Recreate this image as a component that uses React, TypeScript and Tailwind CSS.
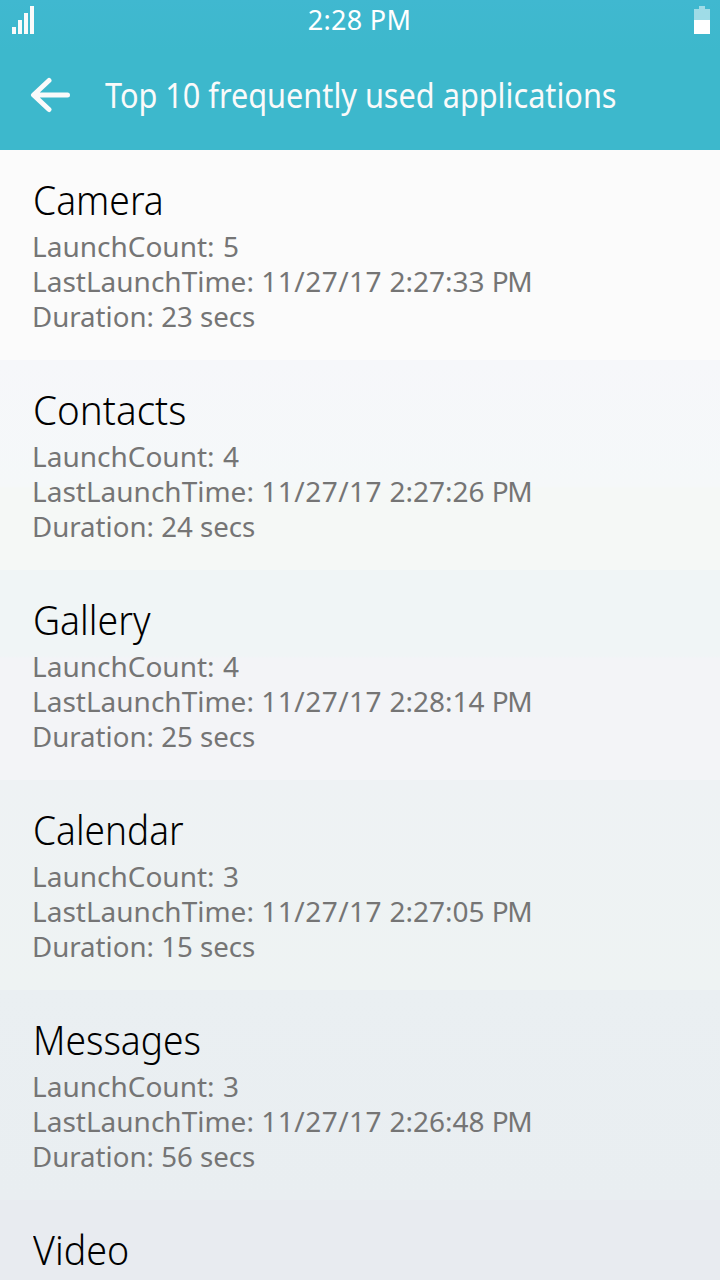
const apps = [
  { name: 'Camera', count: 5, date: '11/27/17', time: '2:27:33', secs: 23, bg: 'bg-[#fbfbfb]', fit: 'scale-x-[0.93]' },
  { name: 'Contacts', count: 4, date: '11/27/17', time: '2:27:26', secs: 24, bg: 'bg-[linear-gradient(#f6f7fa,#f5f8f9_60%,#f5f8f6_61%)]', fit: 'scale-x-[0.965]' },
  { name: 'Gallery', count: 4, date: '11/27/17', time: '2:28:14', secs: 25, bg: 'bg-[linear-gradient(#f0f5f6_41%,#f3f4f7_42%)]', fit: 'scale-x-[0.935]' },
  { name: 'Calendar', count: 3, date: '11/27/17', time: '2:27:05', secs: 15, bg: 'bg-[linear-gradient(#eef2f4,#eef3f3)]', fit: 'scale-x-[0.925]' },
  { name: 'Messages', count: 3, date: '11/27/17', time: '2:26:48', secs: 56, bg: 'bg-[linear-gradient(#eaeff2,#e9eef1)]', fit: 'scale-x-[0.93]' },
];

function AppName({ name, fit }: { name: string; fit: string }) {
  return (
    <h2 className={`ml-px h-[56px] w-max origin-left text-[40px] font-light leading-[54px] text-black ${fit}`}>{name}</h2>
  );
}

export default function App() {
  return (
    <div className="flex h-[1280px] w-[720px] flex-col overflow-hidden font-['Noto_Sans',sans-serif]">
      <header className="h-[150px] shrink-0 bg-[linear-gradient(#40b8d0,#3db8cc_50px)] text-white">
        <div className="grid h-10 grid-cols-[1fr_auto_1fr] items-center pl-3 pr-[10px]">
          <svg width="22" height="28" fill="#fafafa" shapeRendering="crispEdges">
            <path d="M0 21h4v7H0zM6 14h4v14H6zM12 7h4v21h-4zM18 0h4v28h-4z" />
          </svg>
          <span className="-ml-[3px] text-[27px] leading-10 tracking-[0.3px]">2:28 PM</span>
          <svg width="16" height="28" fill="white" shapeRendering="crispEdges" className="justify-self-end">
            <path d="M5 0h6v3h5v11H0V3h5z" opacity=".5" />
            <path d="M0 14h16v14H0z" />
          </svg>
        </div>
        <div className="flex h-[110px] items-center pl-[30px]">
          <svg width="42" height="38" fill="none" stroke="#fafafa" strokeWidth="5" strokeLinecap="round" strokeLinejoin="round">
            <path d="M19 4.5L3.5 19 19 33.5M4 19h33.5" />
          </svg>
          <h1 className="ml-[33px] w-max origin-left scale-x-[0.902] whitespace-nowrap pt-px text-[34px] font-normal text-[#fafafa]">
            Top 10 frequently used applications
          </h1>
        </div>
      </header>
      <main>
        {apps.map((a) => (
          <section key={a.name} className={`h-[210px] pl-8 pt-[23px] ${a.bg}`}>
            <AppName name={a.name} fit={a.fit} />
            <div className="text-[28px] leading-[35px] text-[#757575]">
              <p>
                LaunchCount: <span className="ml-px">{a.count}</span>
              </p>
              <p>
                LastLaunchTime: <span className="tracking-[0.5px]">{a.date}</span> {a.time}{' '}
                <span className="tracking-[-1.5px]">PM</span>
              </p>
              <p className="w-max origin-left scale-x-[0.987]">Duration: {a.secs} secs</p>
            </div>
          </section>
        ))}
        <section className="h-20 bg-[#e8ebf0] pl-8 pt-[23px]">
          <AppName name="Video" fit="scale-x-[0.94]" />
        </section>
      </main>
    </div>
  );
}
